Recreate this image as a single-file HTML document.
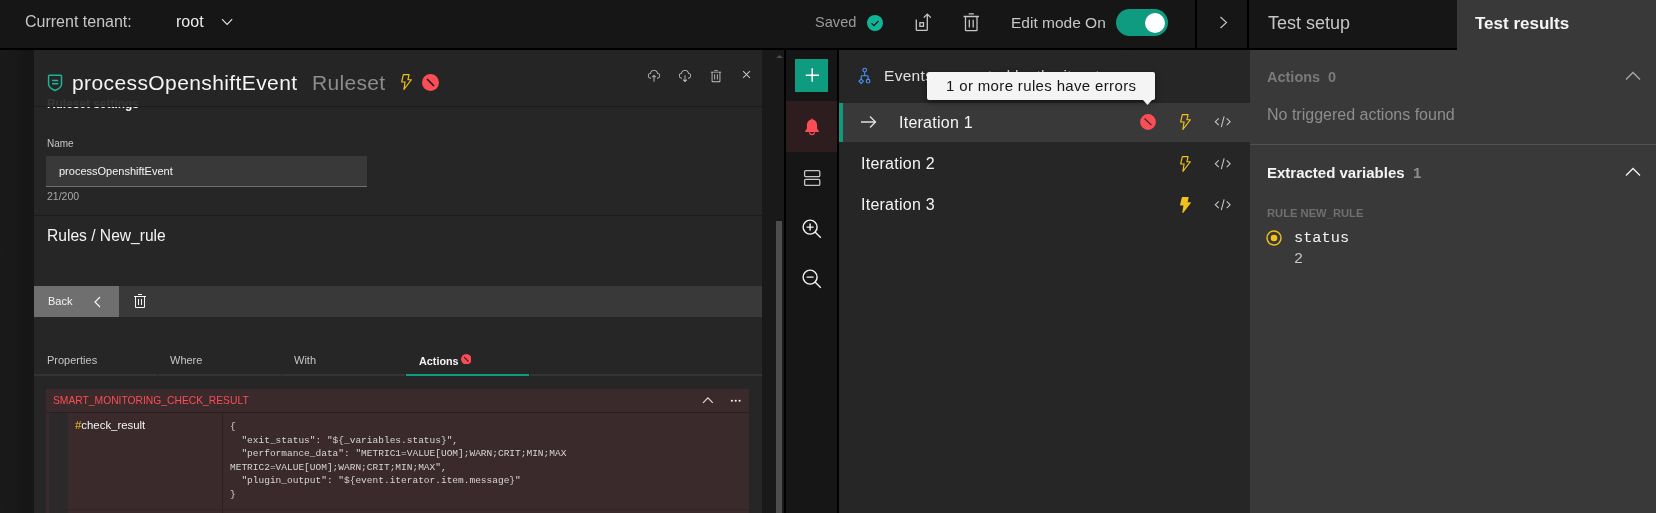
<!DOCTYPE html>
<html><head><meta charset="utf-8"><style>
html,body{margin:0;padding:0;width:1656px;height:513px;overflow:hidden;background:#161616;}
body>div,body>svg{position:absolute;}
</style></head><body>
<div style="left:0px;top:0px;width:1656px;height:48px;background:#161616;"></div>
<div style="left:0px;top:48px;width:1656px;height:2px;background:#000;"></div>
<div style="left:25px;top:13.66px;font:400 16px/16px 'Liberation Sans', sans-serif;color:#c6c6c6;letter-spacing:0px;white-space:pre;will-change:transform;">Current tenant:</div>
<div style="left:176px;top:13.66px;font:400 16px/16px 'Liberation Sans', sans-serif;color:#ececec;letter-spacing:0px;white-space:pre;will-change:transform;">root</div>
<svg style="left:220.5px;top:18px;" width="12" height="8" viewBox="0 0 12 8"><path d="M1 1.2l5.1 5.2 5.1-5.2" fill="none" stroke="#e8e8e8" stroke-width="1.1"/></svg>
<div style="left:815.3px;top:15.44px;font:400 14.6px/14.6px 'Liberation Sans', sans-serif;color:#9a9a9a;letter-spacing:0px;white-space:pre;will-change:transform;">Saved</div>
<svg style="left:867px;top:14.5px;" width="16" height="16" viewBox="0 0 16 16"><circle cx="8" cy="8" r="8" fill="#10b598"/><path d="M4.5 8.3l2.4 2.3 4.6-4.6" fill="none" stroke="#161616" stroke-width="1.3"/></svg>
<svg style="left:915px;top:13px;" width="17" height="18" viewBox="0 0 17 18"><path d="M1.3 6.4V16.5q0 .9 .9 .9H11.4q.9 0 .9-.9V1.2" fill="none" stroke="#c6c6c6" stroke-width="1.3"/><path d="M8.8 4.6l3.5-3.5 3.5 3.5" fill="none" stroke="#c6c6c6" stroke-width="1.3"/><rect x="4.9" y="9.7" width="3.6" height="3.6" fill="none" stroke="#c6c6c6" stroke-width="1.3"/></svg>
<svg style="left:960.6px;top:11.8px;" width="20.5" height="20.5" viewBox="0 0 32 32"><path d="M12 12h2v12h-2zM18 12h2v12h-2zM4 6v2h2v20a2 2 0 0 0 2 2h16a2 2 0 0 0 2-2V8h2V6zm4 22V8h16v20zM12 2h8v2h-8z" fill="#c6c6c6"/></svg>
<div style="left:1011px;top:14.88px;font:400 15.5px/15.5px 'Liberation Sans', sans-serif;color:#c6c6c6;letter-spacing:0px;white-space:pre;will-change:transform;">Edit mode On</div>
<div style="left:1116px;top:9px;width:52px;height:27px;background:#0f9b80;border-radius:14px"></div>
<div style="left:1145px;top:12.5px;width:20px;height:20px;background:#fff;border-radius:50%"></div>
<div style="left:1195px;top:0px;width:2px;height:48px;background:#000;"></div>
<svg style="left:1218.5px;top:15.5px;" width="9" height="13" viewBox="0 0 9 13"><path d="M1.5 1l6 5.5-6 5.5" fill="none" stroke="#c6c6c6" stroke-width="1.1"/></svg>
<div style="left:1247px;top:0px;width:2px;height:50px;background:#000;"></div>
<div style="left:1267.5px;top:14.26px;font:400 18px/18px 'Liberation Sans', sans-serif;color:#c6c6c6;letter-spacing:0px;white-space:pre;will-change:transform;">Test setup</div>
<div style="left:1457px;top:0px;width:199px;height:513px;background:#393939;"></div>
<div style="left:1475px;top:15.11px;font:700 17px/17px 'Liberation Sans', sans-serif;color:#f4f4f4;letter-spacing:0px;white-space:pre;will-change:transform;">Test results</div>
<div style="left:0px;top:50px;width:34px;height:463px;background:linear-gradient(90deg,#1a1a1a 0,#181818 17px,#161616 25px,#161616 34px);"></div>
<div style="left:34px;top:50px;width:728px;height:463px;background:#262626;"></div>
<div style="left:46.9px;top:98.63px;font:700 11.9px/11.9px 'Liberation Sans', sans-serif;color:#f4f4f4;letter-spacing:0px;white-space:pre;will-change:transform;">Ruleset settings</div>
<div style="left:34px;top:50px;width:728px;height:56px;background:rgba(38,38,38,0.93);"></div>
<div style="left:34px;top:106px;width:728px;height:1px;background:#1c1c1c;"></div>
<svg style="left:47px;top:74px;" width="16" height="18" viewBox="0 0 16 18"><path d="M1.6 2.1q0-.9.9-.9H13.6q.9 0 .9.9V10.2c0 2.7-3 4.9-6.45 6.3C4.6 15.1 1.6 12.9 1.6 10.2z" fill="none" stroke="#1ab596" stroke-width="1.5"/><path d="M5 6.4h6.3M5 9.7h6.3" stroke="#1ab596" stroke-width="1.5"/></svg>
<div style="left:72px;top:71.72px;font:400 21px/21px 'Liberation Sans', sans-serif;color:#f4f4f4;letter-spacing:0.4px;white-space:pre;will-change:transform;">processOpenshiftEvent</div>
<div style="left:312px;top:71.72px;font:400 21px/21px 'Liberation Sans', sans-serif;color:#8d8d8d;letter-spacing:0.3px;white-space:pre;will-change:transform;">Ruleset</div>
<svg style="left:401px;top:74px;" width="11" height="16" viewBox="7 2 19 28"><path d="M11.61 29.92a1 1 0 0 1-.6-1.07L12.83 17H8a1 1 0 0 1-1-1.23l3-13A1 1 0 0 1 11 2h10a1 1 0 0 1 .78.37 1 1 0 0 1 .2.85L20.25 11H25a1 1 0 0 1 .9.56 1 1 0 0 1-.11 1l-13 17A1 1 0 0 1 12 30a1.09 1.09 0 0 1-.39-.08zM17.75 13l2-9H11.8L9.26 15h5.91l-1.59 10.28L23 13z" fill="#f1c21b"/></svg>
<svg style="left:421.5px;top:74px;" width="17" height="17" viewBox="0 0 17 17"><circle cx="8.5" cy="8.5" r="8.5" fill="#fa4d56"/><path d="M5 5l7 7" stroke="#161616" stroke-width="1.6"/></svg>
<svg style="left:647.2px;top:68.5px;" width="14" height="14" viewBox="0 0 32 32"><path d="M11 18l1.41 1.41L15 16.83V29h2V16.83l2.59 2.58L21 18l-5-5-5 5zM23.5 22H23v-2h.5a4.5 4.5 0 0 0 .36-9H23l-.1-.82a7 7 0 0 0-13.88 0L9 11h-.86a4.5 4.5 0 0 0 .36 9H9v2h-.5A6.5 6.5 0 0 1 7.2 9.14a9 9 0 0 1 17.6 0A6.5 6.5 0 0 1 23.5 22z" fill="#c6c6c6"/></svg>
<svg style="left:678.2px;top:68.5px;" width="14" height="14" viewBox="0 0 32 32"><path d="M23.5 22H23v-2h.5a4.5 4.5 0 0 0 .36-9H23l-.1-.82a7 7 0 0 0-13.88 0L9 11h-.86a4.5 4.5 0 0 0 .36 9H9v2h-.5A6.5 6.5 0 0 1 7.2 9.14a9 9 0 0 1 17.6 0A6.5 6.5 0 0 1 23.5 22zM17 26.17V14h-2v12.17l-2.59-2.58L11 25l5 5 5-5-1.41-1.41L17 26.17z" fill="#c6c6c6"/></svg>
<svg style="left:709px;top:68.5px;" width="14" height="14" viewBox="0 0 32 32"><path d="M12 12h2v12h-2zM18 12h2v12h-2zM4 6v2h2v20a2 2 0 0 0 2 2h16a2 2 0 0 0 2-2V8h2V6zm4 22V8h16v20zM12 2h8v2h-8z" fill="#c6c6c6"/></svg>
<svg style="left:739.2px;top:67.2px;" width="15" height="15" viewBox="0 0 32 32"><path d="M24 9.4L22.6 8 16 14.6 9.4 8 8 9.4 14.6 16 8 22.6 9.4 24 16 17.4 22.6 24 24 22.6 17.4 16 24 9.4z" fill="#c6c6c6"/></svg>
<div style="left:46.5px;top:138.73px;font:400 10px/10px 'Liberation Sans', sans-serif;color:#c6c6c6;letter-spacing:0px;white-space:pre;will-change:transform;">Name</div>
<div style="left:46px;top:156px;width:321px;height:31px;background:#393939;border-bottom:1px solid #6f6f6f;box-sizing:border-box"></div>
<div style="left:59px;top:165.89px;font:400 11px/11px 'Liberation Sans', sans-serif;color:#f4f4f4;letter-spacing:0px;white-space:pre;will-change:transform;">processOpenshiftEvent</div>
<div style="left:46.5px;top:190.71px;font:400 10.5px/10.5px 'Liberation Sans', sans-serif;color:#a8a8a8;letter-spacing:0px;white-space:pre;will-change:transform;">21/200</div>
<div style="left:34px;top:215px;width:728px;height:1px;background:#1c1c1c;"></div>
<div style="left:47px;top:228.49px;font:400 15.6px/15.6px 'Liberation Sans', sans-serif;color:#f4f4f4;letter-spacing:0px;white-space:pre;will-change:transform;">Rules / New_rule</div>
<div style="left:34px;top:286px;width:728px;height:31px;background:#393939;"></div>
<div style="left:34px;top:286px;width:85px;height:31px;background:#6f6f6f;"></div>
<div style="left:47.5px;top:295.69px;font:400 11px/11px 'Liberation Sans', sans-serif;color:#f4f4f4;letter-spacing:0px;white-space:pre;will-change:transform;">Back</div>
<svg style="left:93px;top:296px;" width="9" height="12" viewBox="0 0 9 12"><path d="M7 1L2 6l5 5" fill="none" stroke="#f4f4f4" stroke-width="1.2"/></svg>
<svg style="left:131.9px;top:293.4px;" width="16" height="16" viewBox="0 0 32 32"><path d="M12 12h2v12h-2zM18 12h2v12h-2zM4 6v2h2v20a2 2 0 0 0 2 2h16a2 2 0 0 0 2-2V8h2V6zm4 22V8h16v20zM12 2h8v2h-8z" fill="#f4f4f4"/></svg>
<div style="left:46.5px;top:355.19px;font:400 11px/11px 'Liberation Sans', sans-serif;color:#c6c6c6;letter-spacing:0px;white-space:pre;will-change:transform;">Properties</div>
<div style="left:170px;top:355.19px;font:400 11px/11px 'Liberation Sans', sans-serif;color:#c6c6c6;letter-spacing:0px;white-space:pre;will-change:transform;">Where</div>
<div style="left:293.7px;top:355.19px;font:400 11px/11px 'Liberation Sans', sans-serif;color:#c6c6c6;letter-spacing:0px;white-space:pre;will-change:transform;">With</div>
<div style="left:418.6px;top:356.06px;font:700 10.8px/10.8px 'Liberation Sans', sans-serif;color:#f4f4f4;letter-spacing:0px;white-space:pre;will-change:transform;">Actions</div>
<svg style="left:460.7px;top:353.6px;" width="10.6" height="10.6" viewBox="0 0 10.6 10.6"><circle cx="5.3" cy="5.3" r="5.3" fill="#fa4d56"/><path d="M3.1 3.1l4.4 4.4" stroke="#262626" stroke-width="1.1"/></svg>
<div style="left:34px;top:374px;width:123px;height:2px;background:#343434;"></div>
<div style="left:158px;top:374px;width:123px;height:2px;background:#343434;"></div>
<div style="left:282px;top:374px;width:123px;height:2px;background:#343434;"></div>
<div style="left:406px;top:374px;width:123px;height:2px;background:#0f9b80;"></div>
<div style="left:530px;top:374px;width:232px;height:2px;background:#343434;"></div>
<div style="left:46px;top:389px;width:703px;height:124px;background:#3b2a2b;"></div>
<div style="left:52.5px;top:396.28px;font:400 10.3px/10.3px 'Liberation Sans', sans-serif;color:#fa4d56;letter-spacing:0px;white-space:pre;will-change:transform;">SMART_MONITORING_CHECK_RESULT</div>
<div style="left:46px;top:412px;width:703px;height:1px;background:#2a1f20;"></div>
<svg style="left:701px;top:396px;" width="13" height="9" viewBox="0 0 13 9"><path d="M2 6.8l4.9-4.9 4.9 4.9" fill="none" stroke="#e0e0e0" stroke-width="1.15"/></svg>
<svg style="left:729px;top:398px;" width="14" height="6" viewBox="0 0 14 6"><circle cx="2.9" cy="2.8" r="1.05" fill="#f4f4f4"/><circle cx="6.7" cy="2.8" r="1.05" fill="#f4f4f4"/><circle cx="10.6" cy="2.8" r="1.05" fill="#f4f4f4"/></svg>
<div style="left:49px;top:413px;width:19px;height:100px;background:#2b2929;"></div>
<div style="left:222px;top:413px;width:1px;height:100px;background:#2a2020;"></div>
<div style="left:49px;top:509px;width:700px;height:1px;background:#2d2727;"></div>
<div style="left:74.5px;top:419.55px;font:400 11.4px/11.4px 'Liberation Sans', sans-serif;color:#f4f4f4;letter-spacing:0px;white-space:pre;will-change:transform;"><span style="color:#f1c21b">#</span>check_result</div>
<div style="left:229.5px;top:422.02px;font:400 9.5px/9.5px 'Liberation Mono', monospace;color:#d6d6d6;letter-spacing:0px;white-space:pre;will-change:transform;">{</div>
<div style="left:229.5px;top:435.62px;font:400 9.5px/9.5px 'Liberation Mono', monospace;color:#d6d6d6;letter-spacing:0px;white-space:pre;will-change:transform;">  "exit_status": "${_variables.status}",</div>
<div style="left:229.5px;top:449.22px;font:400 9.5px/9.5px 'Liberation Mono', monospace;color:#d6d6d6;letter-spacing:0px;white-space:pre;will-change:transform;">  "performance_data": "METRIC1=VALUE[UOM];WARN;CRIT;MIN;MAX</div>
<div style="left:229.5px;top:462.82px;font:400 9.5px/9.5px 'Liberation Mono', monospace;color:#d6d6d6;letter-spacing:0px;white-space:pre;will-change:transform;">METRIC2=VALUE[UOM];WARN;CRIT;MIN;MAX",</div>
<div style="left:229.5px;top:476.42px;font:400 9.5px/9.5px 'Liberation Mono', monospace;color:#d6d6d6;letter-spacing:0px;white-space:pre;will-change:transform;">  "plugin_output": "${event.iterator.item.message}"</div>
<div style="left:229.5px;top:490.02px;font:400 9.5px/9.5px 'Liberation Mono', monospace;color:#d6d6d6;letter-spacing:0px;white-space:pre;will-change:transform;">}</div>
<div style="left:762px;top:50px;width:22px;height:463px;background:#191919;"></div>
<div style="left:776px;top:221px;width:6px;height:292px;background:#4d4d4d;"></div>
<svg style="left:776px;top:54.5px;" width="7" height="3" viewBox="0 0 7 3"><path d="M0 3L3.5 0 7 3z" fill="#4d4d4d"/></svg>
<div style="left:784px;top:50px;width:2px;height:463px;background:#000;"></div>
<div style="left:786px;top:50px;width:51px;height:463px;background:#161616;"></div>
<div style="left:795px;top:59px;width:33px;height:33px;background:#0f9b80;"></div>
<svg style="left:804px;top:67px;" width="16" height="16" viewBox="0 0 16 16"><path d="M1.8 8.2H15M8.2 1.2V14.8" stroke="#fff" stroke-width="1.5"/></svg>
<div style="left:786px;top:101px;width:51px;height:51px;background:#2e1d1f;"></div>
<svg style="left:803px;top:116.5px;" width="18" height="20" viewBox="0 0 18 20"><path d="M9 2.6c-3.2 0-5.1 2.6-5.1 5.6v3.4L2.2 14V15h13.6V14l-1.7-2.4V8.2C14.1 5.2 12.2 2.6 9 2.6z" fill="#fa4d56"/><rect x="8.4" y="1.6" width="1.2" height="1.5" fill="#fa4d56"/><path d="M6.6 15.2a2.4 2.4 0 0 0 4.8 0" fill="none" stroke="#fa4d56" stroke-width="1.2"/></svg>
<svg style="left:803px;top:169px;" width="18" height="18" viewBox="0 0 18 18"><rect x="1.6" y="1.6" width="15.2" height="6" rx="1.2" fill="none" stroke="#c6c6c6" stroke-width="1.3"/><rect x="1.6" y="10.4" width="15.2" height="6" rx="1.2" fill="none" stroke="#c6c6c6" stroke-width="1.3"/></svg>
<svg style="left:801px;top:217.7px;" width="22.4" height="22.4" viewBox="0 0 32 32"><path d="M18 12h-4V8h-2v4H8v2h4v4h2v-4h4v-2zM21.48 20.07A10.46 10.46 0 0 0 24 13a11 11 0 1 0-11 11 10.46 10.46 0 0 0 7.07-2.52L27.59 29 29 27.59zM13 22a9 9 0 1 1 9-9 9 9 0 0 1-9 9z" fill="#f4f4f4"/></svg>
<svg style="left:801px;top:267.7px;" width="22.4" height="22.4" viewBox="0 0 32 32"><path d="M8 12h10v2H8zM21.48 20.07A10.46 10.46 0 0 0 24 13a11 11 0 1 0-11 11 10.46 10.46 0 0 0 7.07-2.52L27.59 29 29 27.59zM13 22a9 9 0 1 1 9-9 9 9 0 0 1-9 9z" fill="#f4f4f4"/></svg>
<div style="left:837px;top:50px;width:2px;height:463px;background:#000;"></div>
<div style="left:839px;top:50px;width:411px;height:463px;background:#262626;"></div>
<svg style="left:852px;top:62px;" width="26" height="26" viewBox="0 0 26 26"><g fill="none" stroke="#4893f5" stroke-width="1.1"><circle cx="12.7" cy="8.1" r="1.85"/><path d="M12.7 10.15V13.7M9.2 17.1V14.5q0-.8.8-.8H15.3q.8 0 .8.8V17.1"/><path d="M9.2 17.1L11.4 19.3 9.2 21.5 7 19.3z"/><circle cx="16.1" cy="19.2" r="1.85"/></g></svg>
<div style="left:883.7px;top:68.08px;font:400 15.5px/15.5px 'Liberation Sans', sans-serif;color:#e0e0e0;letter-spacing:0.3px;white-space:pre;will-change:transform;">Events generated by the iterator</div>
<div style="left:839px;top:103px;width:411px;height:39px;background:#393939;"></div>
<div style="left:839px;top:103px;width:4px;height:39px;background:#0f9b80;"></div>
<svg style="left:860px;top:115px;" width="17" height="14" viewBox="0 0 17 14"><path d="M1 7h15M10 1.5L15.5 7 10 12.5" fill="none" stroke="#e0e0e0" stroke-width="1.3"/></svg>
<div style="left:899px;top:114.96px;font:400 16px/16px 'Liberation Sans', sans-serif;color:#f4f4f4;letter-spacing:0.25px;white-space:pre;will-change:transform;">Iteration 1</div>
<div style="left:861px;top:155.96px;font:400 16px/16px 'Liberation Sans', sans-serif;color:#f4f4f4;letter-spacing:0.25px;white-space:pre;will-change:transform;">Iteration 2</div>
<div style="left:861px;top:196.96px;font:400 16px/16px 'Liberation Sans', sans-serif;color:#f4f4f4;letter-spacing:0.25px;white-space:pre;will-change:transform;">Iteration 3</div>
<svg style="left:1140px;top:113.8px;" width="16" height="16" viewBox="0 0 16 16"><circle cx="8" cy="8" r="7.9" fill="#fa4d56"/><path d="M4.5 4.5l6.9 6.7" stroke="#262626" stroke-width="1.1"/></svg>
<svg style="left:1179.6px;top:113.8px;" width="11" height="16" viewBox="7 2 19 28"><path d="M11.61 29.92a1 1 0 0 1-.6-1.07L12.83 17H8a1 1 0 0 1-1-1.23l3-13A1 1 0 0 1 11 2h10a1 1 0 0 1 .78.37 1 1 0 0 1 .2.85L20.25 11H25a1 1 0 0 1 .9.56 1 1 0 0 1-.11 1l-13 17A1 1 0 0 1 12 30a1.09 1.09 0 0 1-.39-.08zM17.75 13l2-9H11.8L9.26 15h5.91l-1.59 10.28L23 13z" fill="#f1c21b"/></svg>
<svg style="left:1179.6px;top:155.5px;" width="11" height="16" viewBox="7 2 19 28"><path d="M11.61 29.92a1 1 0 0 1-.6-1.07L12.83 17H8a1 1 0 0 1-1-1.23l3-13A1 1 0 0 1 11 2h10a1 1 0 0 1 .78.37 1 1 0 0 1 .2.85L20.25 11H25a1 1 0 0 1 .9.56 1 1 0 0 1-.11 1l-13 17A1 1 0 0 1 12 30a1.09 1.09 0 0 1-.39-.08zM17.75 13l2-9H11.8L9.26 15h5.91l-1.59 10.28L23 13z" fill="#f1c21b"/></svg>
<svg style="left:1179.6px;top:196.8px;" width="11" height="16" viewBox="7 2 19 28"><path d="M11.61 29.92a1 1 0 0 1-.6-1.07L12.83 17H8a1 1 0 0 1-1-1.23l3-13A1 1 0 0 1 11 2h10a1 1 0 0 1 .78.37 1 1 0 0 1 .2.85L20.25 11H25a1 1 0 0 1 .9.56 1 1 0 0 1-.11 1l-13 17A1 1 0 0 1 12 30a1.09 1.09 0 0 1-.39-.08z" fill="#f1c21b"/></svg>
<svg style="left:1214px;top:112.6px;" width="17.44" height="17.44" viewBox="0 0 32 32"><path d="M31 16l-7 7-1.41-1.41L28.17 16l-5.58-5.59L24 9l7 7zM1 16l7-7 1.41 1.41L3.83 16l5.58 5.59L8 23l-7-7zM12.419 25.484L17.639 6l1.932.518L14.35 26.002z" fill="#c6c6c6"/></svg>
<svg style="left:1214px;top:155.2px;" width="17.44" height="17.44" viewBox="0 0 32 32"><path d="M31 16l-7 7-1.41-1.41L28.17 16l-5.58-5.59L24 9l7 7zM1 16l7-7 1.41 1.41L3.83 16l5.58 5.59L8 23l-7-7zM12.419 25.484L17.639 6l1.932.518L14.35 26.002z" fill="#c6c6c6"/></svg>
<svg style="left:1214px;top:196.3px;" width="17.44" height="17.44" viewBox="0 0 32 32"><path d="M31 16l-7 7-1.41-1.41L28.17 16l-5.58-5.59L24 9l7 7zM1 16l7-7 1.41 1.41L3.83 16l5.58 5.59L8 23l-7-7zM12.419 25.484L17.639 6l1.932.518L14.35 26.002z" fill="#c6c6c6"/></svg>
<div style="left:927px;top:72px;width:227.5px;height:27.5px;background:#f4f4f4;border-radius:2px;box-shadow:0 2px 6px rgba(0,0,0,0.5)"></div>
<svg style="left:1142.5px;top:100px;" width="9" height="5" viewBox="0 0 9 5"><path d="M0 0h9L4.5 5z" fill="#f4f4f4"/></svg>
<div style="left:946px;top:78.20px;font:400 15px/15px 'Liberation Sans', sans-serif;color:#161616;letter-spacing:0.35px;white-space:pre;will-change:transform;">1 or more rules have errors</div>
<div style="left:1250px;top:50px;width:406px;height:463px;background:#393939;"></div>
<div style="left:1267px;top:69.73px;font:700 14.5px/14.5px 'Liberation Sans', sans-serif;color:#7a7a7a;letter-spacing:0px;white-space:pre;will-change:transform;">Actions</div>
<div style="left:1328px;top:69.73px;font:700 14.5px/14.5px 'Liberation Sans', sans-serif;color:#7a7a7a;letter-spacing:0px;white-space:pre;will-change:transform;">0</div>
<svg style="left:1625px;top:71px;" width="16" height="10" viewBox="0 0 16 10"><path d="M1 8.5l7-7 7 7" fill="none" stroke="#a8a8a8" stroke-width="1.3"/></svg>
<div style="left:1267px;top:106.86px;font:400 16px/16px 'Liberation Sans', sans-serif;color:#8d8d8d;letter-spacing:0px;white-space:pre;will-change:transform;">No triggered actions found</div>
<div style="left:1250px;top:144px;width:406px;height:1px;background:#525252;"></div>
<div style="left:1267px;top:165.10px;font:700 15px/15px 'Liberation Sans', sans-serif;color:#f4f4f4;letter-spacing:0px;white-space:pre;will-change:transform;">Extracted variables</div>
<div style="left:1413px;top:165.10px;font:700 15px/15px 'Liberation Sans', sans-serif;color:#8d8d8d;letter-spacing:0px;white-space:pre;will-change:transform;">1</div>
<svg style="left:1625px;top:166.5px;" width="16" height="10" viewBox="0 0 16 10"><path d="M1 8.5l7-7 7 7" fill="none" stroke="#f4f4f4" stroke-width="1.3"/></svg>
<div style="left:1267px;top:208.22px;font:700 11.2px/11.2px 'Liberation Sans', sans-serif;color:#6f6f6f;letter-spacing:0px;white-space:pre;will-change:transform;">RULE NEW_RULE</div>
<svg style="left:1266px;top:230px;" width="16" height="16" viewBox="0 0 16 16"><circle cx="8" cy="8" r="7" fill="none" stroke="#f1c21b" stroke-width="1.4"/><circle cx="8" cy="8" r="3.3" fill="#f1c21b"/></svg>
<div style="left:1293.5px;top:230.77px;font:400 15.3px/15.3px 'Liberation Mono', monospace;color:#f4f4f4;letter-spacing:0px;white-space:pre;will-change:transform;">status</div>
<div style="left:1293.5px;top:251.80px;font:400 15px/15px 'Liberation Mono', monospace;color:#c6c6c6;letter-spacing:0px;white-space:pre;will-change:transform;">2</div>
</body></html>
